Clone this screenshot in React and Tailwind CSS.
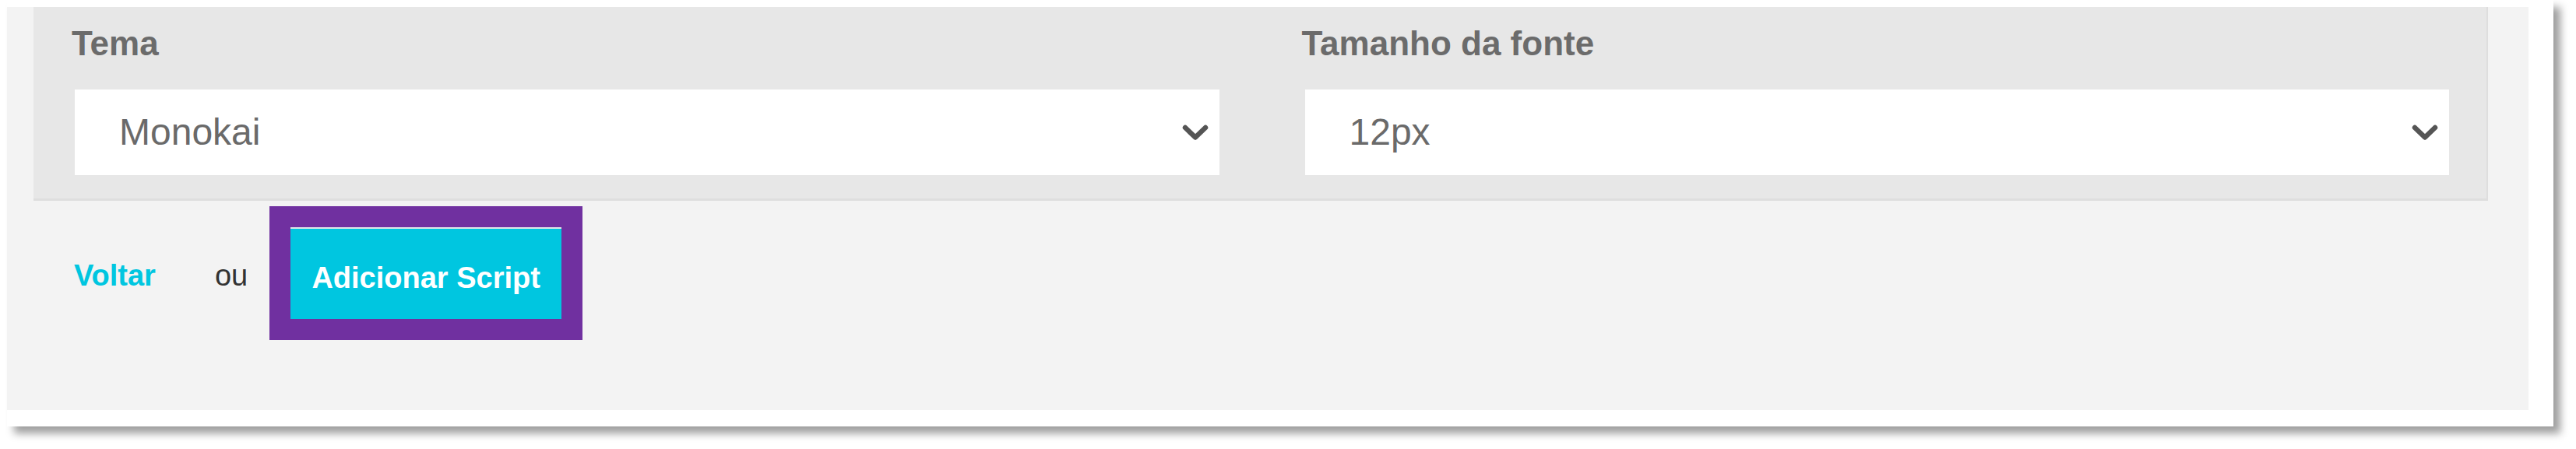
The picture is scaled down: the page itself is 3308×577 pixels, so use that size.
function Chevron() {
  return (
    <svg width="34" height="21" viewBox="0 0 34 21" fill="none">
      <polyline points="4,4 17,16.5 30,4" stroke="#555" strokeWidth="6.5" strokeLinecap="round" strokeLinejoin="round" />
    </svg>
  );
}

function SelectField({ label, value }) {
  return (
    <div className="flex flex-col">
      <label className="-ml-1 block text-[44px] font-bold leading-[50px] text-[#6b6b6b]">{label}</label>
      <div className="mt-[34px] flex h-[110px] items-center justify-between bg-white pl-[57px] pr-[14px]">
        <span className="text-[48px] leading-none text-[#6a6a6a]">{value}</span>
        <Chevron />
      </div>
    </div>
  );
}

export default function App() {
  return (
    <div className="h-[577px] w-[3308px] bg-white pl-[9px] font-['Liberation_Sans',Arial,sans-serif]">
      <div className="h-[548px] w-[3270px] bg-white pt-[9px] shadow-[9px_9px_10px_rgba(0,0,0,0.38)]">
        <div className="h-[518px] w-[3238px] bg-[#f3f3f3]">
          <div className="ml-[34px] w-[3152px] border-r-2 border-b-[3px] border-[#dedede] bg-[#e7e7e7] pt-[22px] pr-[48px] pb-[30px] pl-[53px]">
            <div className="grid grid-cols-2 gap-[110px]">
              <SelectField label="Tema" value="Monokai" />
              <SelectField label="Tamanho da fonte" value="12px" />
            </div>
          </div>

          <div className="mt-[7px] flex items-center pl-[86px]">
            <a className="pt-[6px] text-[38px] font-bold leading-none text-[#00c6e0]">Voltar</a>
            <span className="ml-[76px] pt-[6px] text-[38px] leading-none text-[#333]">ou</span>
            <div className="ml-[28px] bg-[#7030a0] p-[27px]">
              <button className="flex h-[118px] w-[348px] items-center justify-center border-t-2 border-[#dfe6e8] bg-[#00c6e0] pt-[9px] text-[38px] font-bold leading-none text-white">
                Adicionar Script
              </button>
            </div>
          </div>
        </div>
      </div>
    </div>
  );
}
